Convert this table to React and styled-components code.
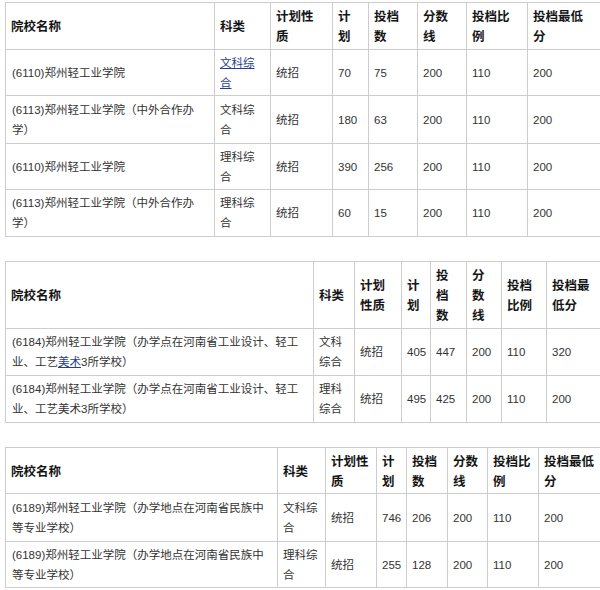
import React from "react";
import styled, { createGlobalStyle } from "styled-components";

const Global = createGlobalStyle`
  html, body { margin: 0; padding: 0; background: #fff; overflow: hidden; width: 600px; }
  body { font-family: "Liberation Sans", "Noto Sans CJK SC", sans-serif; }
`;

const Page = styled.div`
  display: flex;
  flex-direction: column;
  padding: 2px 0 0 5px;
`;

const Table = styled.table`
  border-collapse: collapse;
  table-layout: fixed;
  width: 615px;
  margin-top: ${(p) => p.$gap || 0}px;
  color: #333;
  font-size: 11.5px;
  line-height: 20px;
`;

const Row = styled.tr`
  height: ${(p) => p.$h}px;
`;

const Head = styled.th`
  border: 1px solid #cdcdcd;
  padding: 0 5px;
  text-align: left;
  vertical-align: middle;
  font-weight: bold;
  font-size: 12.5px;
  color: #151515;
  white-space: pre;
  overflow: hidden;
  font-family: "Noto Sans CJK SC", sans-serif;
`;

const Cell = styled.td`
  border: 1px solid #cdcdcd;
  padding: 0 4px 0 ${(p) => (p.$first ? 6 : 5)}px;
  vertical-align: middle;
  white-space: pre;
  overflow: hidden;
`;

const Link = styled.a`
  color: #27408e;
  text-decoration: underline;
`;

const tables = [
  {
    widths: [209, 56, 62, 36, 49, 49, 61, 93],
    heads: ["院校名称", "科类", "计划性\n质", "计\n划", "投档\n数", "分数\n线", "投档比\n例", "投档最低\n分"],
    headH: 47,
    rows: [
      { h: 46, cells: ["(6110)郑州轻工业学院", { link: "文科综\n合" }, "统招", "70", "75", "200", "110", "200"] },
      { h: 48, cells: ["(6113)郑州轻工业学院（中外合作办\n学）", "文科综\n合", "统招", "180", "63", "200", "110", "200"] },
      { h: 46, cells: ["(6110)郑州轻工业学院", "理科综\n合", "统招", "390", "256", "200", "110", "200"] },
      { h: 47, cells: ["(6113)郑州轻工业学院（中外合作办\n学）", "理科综\n合", "统招", "60", "15", "200", "110", "200"] },
    ],
  },
  {
    gap: 24,
    widths: [308, 41, 47, 29, 36, 35, 45, 74],
    heads: ["院校名称", "科类", "计划\n性质", "计\n划", "投\n档\n数", "分\n数\n线", "投档\n比例", "投档最\n低分"],
    headH: 67,
    rows: [
      {
        h: 47,
        cells: [
          { pre: "(6184)郑州轻工业学院（办学点在河南省工业设计、轻工\n业、工艺", link: "美术", post: "3所学校）" },
          "文科\n综合", "统招", "405", "447", "200", "110", "320",
        ],
      },
      { h: 47, cells: ["(6184)郑州轻工业学院（办学点在河南省工业设计、轻工\n业、工艺美术3所学校）", "理科\n综合", "统招", "495", "425", "200", "110", "200"] },
    ],
  },
  {
    gap: 24,
    widths: [272, 48, 51, 30, 41, 40, 51, 82],
    heads: ["院校名称", "科类", "计划性\n质", "计\n划", "投档\n数", "分数\n线", "投档比\n例", "投档最低\n分"],
    headH: 46,
    rows: [
      { h: 48, cells: ["(6189)郑州轻工业学院（办学地点在河南省民族中\n等专业学校）", "文科综\n合", "统招", "746", "206", "200", "110", "200"] },
      { h: 46, cells: ["(6189)郑州轻工业学院（办学地点在河南省民族中\n等专业学校）", "理科综\n合", "统招", "255", "128", "200", "110", "200"] },
    ],
  },
];

function renderCell(c) {
  if (typeof c === "string") return c;
  return (
    <>
      {c.pre}
      <Link href="#">{c.link}</Link>
      {c.post}
    </>
  );
}

export default function App() {
  return (
    <>
      <Global />
      <Page>
        {tables.map((t, ti) => (
          <Table key={ti} $gap={t.gap}>
            <colgroup>
              {t.widths.map((w, i) => (
                <col key={i} style={{ width: w }} />
              ))}
            </colgroup>
            <thead>
              <Row $h={t.headH}>
                {t.heads.map((h, i) => (
                  <Head key={i}>{h}</Head>
                ))}
              </Row>
            </thead>
            <tbody>
              {t.rows.map((r, ri) => (
                <Row key={ri} $h={r.h}>
                  {r.cells.map((c, ci) => (
                    <Cell key={ci} $first={ci === 0}>
                      {renderCell(c)}
                    </Cell>
                  ))}
                </Row>
              ))}
            </tbody>
          </Table>
        ))}
      </Page>
    </>
  );
}
